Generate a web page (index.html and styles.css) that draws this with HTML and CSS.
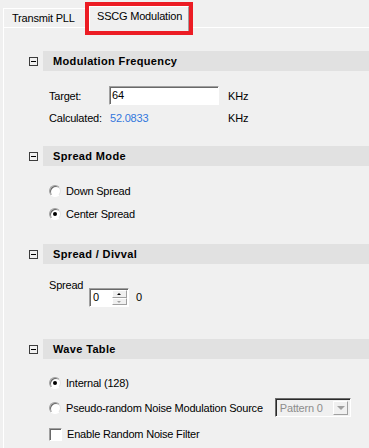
FILE: index.html
```
<!DOCTYPE html>
<html>
<head>
<meta charset="utf-8">
<link rel="stylesheet" href="styles.css">
</head>
<body>
<div class="tabs">
  <div class="tab">Transmit PLL</div>
  <div class="tab active">SSCG Modulation</div>
</div>
<div class="panel">
  <section class="group g1">
    <div class="gh"><span class="minus"></span><div class="bar">Modulation Frequency</div></div>
    <div class="gb freq">
      <span>Target:</span><span class="input">64</span><span>KHz</span>
      <span>Calculated:</span><span class="calc">52.0833</span><span>KHz</span>
    </div>
  </section>
  <section class="group g2">
    <div class="gh"><span class="minus"></span><div class="bar">Spread Mode</div></div>
    <div class="gb rows">
      <div class="opt"><span class="radio"></span><span>Down Spread</span></div>
      <div class="opt"><span class="radio on"></span><span>Center Spread</span></div>
    </div>
  </section>
  <section class="group g3">
    <div class="gh"><span class="minus"></span><div class="bar">Spread / Divval</div></div>
    <div class="gb spread">
      <span class="slabel">Spread</span>
      <div class="spinner"><span class="sval">0</span><span class="sbtns"><span class="sb up"></span><span class="sb down"></span></span></div>
      <span class="sout">0</span>
    </div>
  </section>
  <section class="group g4">
    <div class="gh"><span class="minus"></span><div class="bar">Wave Table</div></div>
    <div class="gb rows r4">
      <div class="opt"><span class="radio on"></span><span>Internal (128)</span></div>
      <div class="opt tall"><span class="radio"></span><span>Pseudo-random Noise Modulation Source</span>
        <div class="combo"><span class="ctext">Pattern 0</span><span class="cbtn"></span></div>
      </div>
      <div class="opt last"><span class="check"></span><span>Enable Random Noise Filter</span></div>
    </div>
  </section>
</div>
</body>
</html>
```
FILE: styles.css
```
body {
  margin: 0;
  background: #f0f0f0;
  font: 11px "Liberation Sans", Arial, sans-serif;
  letter-spacing: -0.2px;
  color: #000;
  width: 369px;
  height: 448px;
  overflow: hidden;
}
.tabs {
  display: flex;
  align-items: flex-end;
  height: 27px;
  padding-left: 3px;
}
.tab {
  height: 19px;
  box-sizing: border-box;
  border-top: 1px solid #fff;
  border-left: 1px solid #fff;
  border-right: 1px solid #a0a0a0;
  padding: 3px 0 0 8px;
  width: 83px;
  line-height: 13px;
  white-space: nowrap;
}
.tab.active {
  height: 25px;
  margin-bottom: -4px;
  margin-left: 3px;
  width: 100px;
  padding: 3px 0 0 7px;
  position: relative;
  z-index: 1;
  background: #f0f0f0;
  outline: 4px solid #ec1c24;
}
.panel {
  margin-left: 3px;
  border-top: 1px solid #fff;
  border-left: 1px solid #fff;
  height: 420px;
  padding-left: 25px;
}
.gh {
  display: flex;
  align-items: center;
  height: 20px;
}
.minus {
  width: 9px;
  height: 9px;
  box-sizing: border-box;
  border: 1px solid #3c3c3c;
  position: relative;
  margin-right: 5px;
  background: #f0f0f0;
}
.minus::after {
  content: "";
  position: absolute;
  left: 1px;
  top: 3px;
  width: 5px;
  height: 1px;
  background: #000;
}
.bar {
  flex: 1;
  height: 20px;
  background: #e1e1e1;
  font-weight: bold;
  letter-spacing: 0.35px;
  padding-left: 10px;
  line-height: 20px;
}
.gb { padding-left: 20px; }
.g1 { margin-top: 23px; }
.g1 .gb { padding-top: 15px; }
.freq {
  display: grid;
  grid-template-columns: 60px 119px auto;
  grid-template-rows: 19px 16px;
  row-gap: 5px;
  align-items: center;
}
.input {
  width: 110px;
  height: 19px;
  box-sizing: border-box;
  background: #fff;
  border: 1px solid;
  border-color: #a0a0a0 #fff #fff #a0a0a0;
  box-shadow: inset 1px 1px 0 #696969;
  padding-left: 2px;
  line-height: 17px;
}
.calc {
  color: #3377dd;
  padding-left: 1px;
}
.g2 { margin-top: 20px; }
.g2 .gb { padding-top: 17px; }
.rows {
  display: flex;
  flex-direction: column;
  gap: 7px;
}
.opt {
  display: flex;
  align-items: center;
  height: 16px;
  gap: 5px;
  white-space: nowrap;
}
.radio {
  width: 12px;
  height: 12px;
  border-radius: 50%;
  background: #fff;
  box-sizing: border-box;
  border: 1px solid;
  border-color: #a0a0a0 #e3e3e3 #fff #a0a0a0;
  box-shadow: inset 1px 1px 0 #696969;
  position: relative;
  flex: none;
}
.radio.on::after {
  content: "";
  position: absolute;
  left: 3px;
  top: 3px;
  width: 4px;
  height: 4px;
  border-radius: 50%;
  background: #000;
}
.check {
  width: 13px;
  height: 13px;
  box-sizing: border-box;
  background: #fff;
  border: 1px solid;
  border-color: #a0a0a0 #fff #fff #a0a0a0;
  box-shadow: inset 1px 1px 0 #696969;
  flex: none;
}
.g3 { margin-top: 22px; }
.g3 .gb { padding-top: 14px; }
.spread {
  display: flex;
  align-items: flex-start;
}
.slabel {
  width: 40px;
  line-height: 14px;
}
.spinner {
  margin-top: 10px;
  width: 40px;
  height: 19px;
  box-sizing: border-box;
  background: #fff;
  border: 1px solid;
  border-color: #a0a0a0 #fff #fff #a0a0a0;
  box-shadow: inset 1px 1px 0 #696969;
  display: flex;
  padding: 1px 1px 1px 3px;
}
.sval {
  flex: 1;
  line-height: 15px;
}
.sbtns {
  width: 15px;
  display: flex;
  flex-direction: column;
}
.sb {
  flex: 1;
  box-sizing: border-box;
  background: #f0f0f0;
  border: 1px solid;
  border-color: #fff #a0a0a0 #a0a0a0 #fff;
  position: relative;
}
.sb::after {
  content: "";
  position: absolute;
  left: 4px;
  top: 2px;
  border-left: 2px solid transparent;
  border-right: 2px solid transparent;
}
.sb.up::after { border-bottom: 2px solid #000; }
.sb.down::after { border-top: 2px solid #a0a0a0; }
.sout {
  margin-top: 10px;
  margin-left: 7px;
  line-height: 19px;
}
.g4 { margin-top: 32px; }
.g4 .gb { padding-top: 16px; }
.opt.tall { height: 19px; }
.opt.last { margin-top: 2px; }
.combo {
  margin-left: 7px;
  width: 76px;
  height: 19px;
  box-sizing: border-box;
  border: 1px solid;
  border-color: #6d6d6d #fff #fff #6d6d6d;
  box-shadow: inset 1px 1px 0 #2a2a2a;
  background: #f0f0f0;
  display: flex;
  align-items: center;
  padding: 2px 2px 1px 4px;
}
.ctext {
  flex: 1;
  color: #8d8d8d;
}
.cbtn {
  width: 15px;
  height: 14px;
  box-sizing: border-box;
  border: 1px solid;
  border-color: #fff #a0a0a0 #a0a0a0 #fff;
  position: relative;
}
.cbtn::after {
  content: "";
  position: absolute;
  left: 3px;
  top: 4px;
  border-left: 4px solid transparent;
  border-right: 4px solid transparent;
  border-top: 4px solid #a0a0a0;
}
```
